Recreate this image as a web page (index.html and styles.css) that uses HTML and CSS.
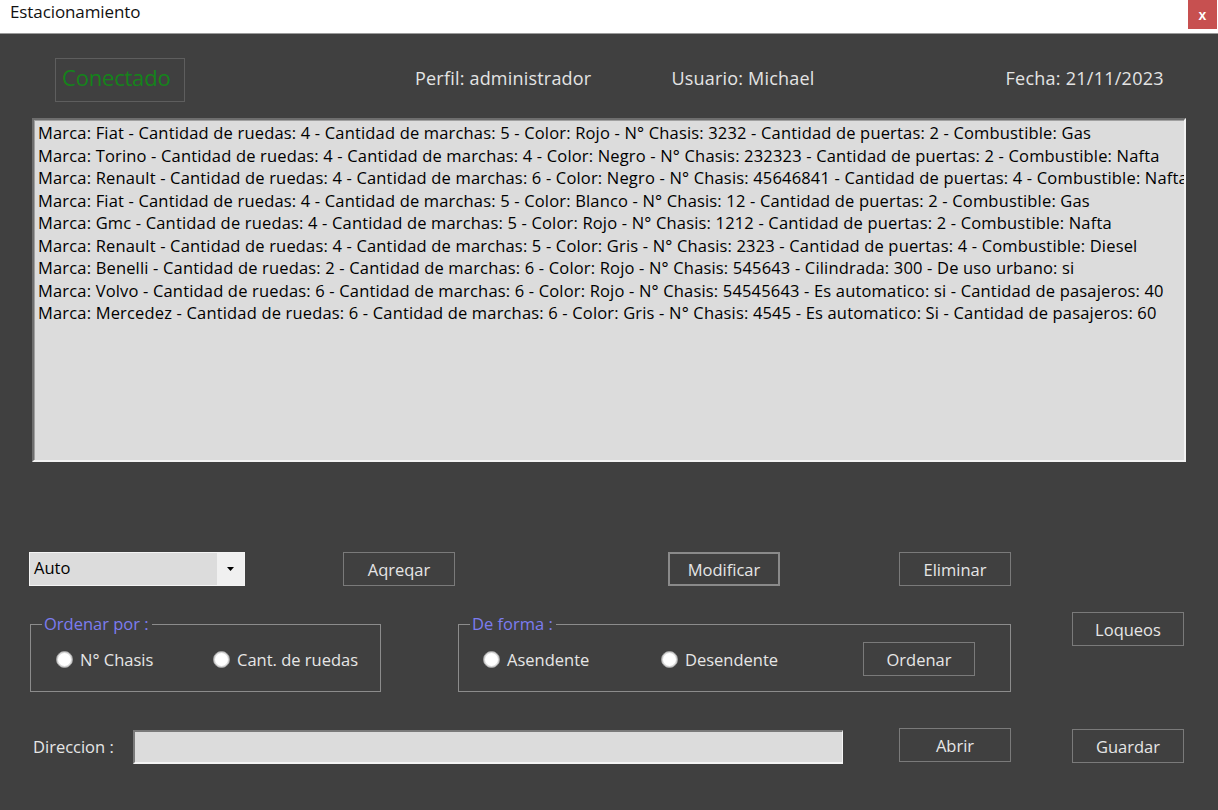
FILE: index.html
```html
<!DOCTYPE html>
<html lang="es">
<head>
<meta charset="utf-8">
<title>Estacionamiento</title>
<link rel="stylesheet" href="styles.css">
</head>
<body>
<div class="app">
  <div class="titlebar">
    <span class="title">Estacionamiento</span>
    <span class="close">x</span>
  </div>
  <div class="window">
    <div class="header">
      <div class="status">Conectado</div>
      <div class="info perfil">Perfil: administrador</div>
      <div class="info usuario">Usuario: Michael</div>
      <div class="info fecha">Fecha: 21/11/2023</div>
    </div>
    <div class="listbox">
      <div>Marca: Fiat - Cantidad de ruedas: 4 - Cantidad de marchas: 5 - Color: Rojo - N° Chasis: 3232 - Cantidad de puertas: 2 - Combustible: Gas</div>
      <div>Marca: Torino - Cantidad de ruedas: 4 - Cantidad de marchas: 4 - Color: Negro - N° Chasis: 232323 - Cantidad de puertas: 2 - Combustible: Nafta</div>
      <div>Marca: Renault - Cantidad de ruedas: 4 - Cantidad de marchas: 6 - Color: Negro - N° Chasis: 45646841 - Cantidad de puertas: 4 - Combustible: Nafta</div>
      <div>Marca: Fiat - Cantidad de ruedas: 4 - Cantidad de marchas: 5 - Color: Blanco - N° Chasis: 12 - Cantidad de puertas: 2 - Combustible: Gas</div>
      <div>Marca: Gmc - Cantidad de ruedas: 4 - Cantidad de marchas: 5 - Color: Rojo - N° Chasis: 1212 - Cantidad de puertas: 2 - Combustible: Nafta</div>
      <div>Marca: Renault - Cantidad de ruedas: 4 - Cantidad de marchas: 5 - Color: Gris - N° Chasis: 2323 - Cantidad de puertas: 4 - Combustible: Diesel</div>
      <div>Marca: Benelli - Cantidad de ruedas: 2 - Cantidad de marchas: 6 - Color: Rojo - N° Chasis: 545643 - Cilindrada: 300 - De uso urbano: si</div>
      <div>Marca: Volvo - Cantidad de ruedas: 6 - Cantidad de marchas: 6 - Color: Rojo - N° Chasis: 54545643 - Es automatico: si - Cantidad de pasajeros: 40</div>
      <div>Marca: Mercedez - Cantidad de ruedas: 6 - Cantidad de marchas: 6 - Color: Gris - N° Chasis: 4545 - Es automatico: Si - Cantidad de pasajeros: 60</div>
    </div>
    <div class="actions">
      <div class="combo">
        <span class="combo-text">Auto</span>
        <span class="combo-btn"><svg width="8" height="4" viewBox="0 0 8 4"><path d="M0 0h7L3.5 4z" fill="#000"/></svg></span>
      </div>
      <button class="btn agregar">Aqreqar</button>
      <button class="btn modificar">Modificar</button>
      <button class="btn eliminar">Eliminar</button>
    </div>
    <div class="groups">
      <fieldset class="group g1">
        <legend>Ordenar por :</legend>
        <label class="radio r1"><span class="dot"></span>N° Chasis</label>
        <label class="radio r2"><span class="dot"></span>Cant. de ruedas</label>
      </fieldset>
      <fieldset class="group g2">
        <legend>De forma :</legend>
        <label class="radio r3"><span class="dot"></span>Asendente</label>
        <label class="radio r4"><span class="dot"></span>Desendente</label>
        <button class="btn ordenar">Ordenar</button>
      </fieldset>
      <button class="btn loqueos">Loqueos</button>
    </div>
    <div class="bottom">
      <span class="dir-label">Direccion :</span>
      <div class="textbox"></div>
      <button class="btn abrir">Abrir</button>
      <button class="btn guardar">Guardar</button>
    </div>
  </div>
</div>
</body>
</html>
```

FILE: styles.css
```css
* { box-sizing: border-box; }
html, body { margin: 0; padding: 0; }
body {
  width: 1218px;
  height: 810px;
  overflow: hidden;
  font-family: "Open Sans", "Noto Sans", sans-serif;
  background: #404040;
}
.app { width: 1218px; height: 810px; display: flex; flex-direction: column; }
.titlebar {
  height: 34px;
  background: #ffffff;
  border-bottom: 1px solid #9a9a9a;
  display: flex;
  justify-content: space-between;
  align-items: flex-start;
}
.title {
  font-size: 17px;
  color: #111;
  margin: 0 0 0 10px;
  letter-spacing: -0.1px;
  line-height: 24px;
}
.close {
  width: 29px;
  height: 29px;
  margin-right: 1px;
  background: #c75050;
  color: #fff;
  font-weight: bold;
  font-size: 14px;
  display: flex;
  align-items: center;
  justify-content: center;
  font-family: "Liberation Sans", sans-serif;
}
.window { flex: 1; background: #404040; }
.header { display: flex; align-items: center; height: 44px; margin-top: 24px; }
.status {
  margin-left: 55px;
  width: 130px;
  height: 44px;
  border: 1px solid #5e5e5e;
  color: #14841a;
  font-size: 22px;
  letter-spacing: -0.2px;
  padding-left: 6px;
  line-height: 36px;
}
.info { color: #e4e4e4; font-size: 18px; letter-spacing: 0.2px; line-height: 24px; margin-top: -4px; }
.perfil { margin-left: 230px; }
.usuario { margin-left: 80px; }
.fecha { margin-left: 191px; letter-spacing: 0.25px; }
.listbox {
  margin: 16px 0 0 32px;
  width: 1154px;
  height: 344px;
  background: #dcdcdc;
  border-top: 2px solid #6e6e6e;
  border-left: 2px solid #6e6e6e;
  border-right: 2px solid #f2f2f2;
  border-bottom: 2px solid #f2f2f2;
  box-shadow: inset 1px 1px 0 #a0a0a0;
  padding: 2px 0 0 4px;
  overflow: hidden;
  color: #000;
  font-size: 16.5px;
  line-height: 22.5px;
  letter-spacing: 0.17px;
  white-space: nowrap;
}
.actions { display: flex; align-items: center; margin-top: 90px; height: 34px; }
.combo {
  margin-left: 29px;
  width: 216px;
  height: 34px;
  border: 1px solid #f4f4f4;
  background: #dcdcdc;
  display: flex;
}
.combo-text { flex: 1; font-size: 16.5px; color: #000; padding-left: 4px; line-height: 30px; }
.combo-btn { width: 27px; background: #f0f0f0; display: flex; align-items: center; justify-content: center; }
.btn {
  width: 112px;
  height: 34px;
  background: #404040;
  border: 1px solid #7a7a7a;
  color: #e6e6e6;
  font-family: "Open Sans", "Noto Sans", sans-serif;
  font-size: 16.5px;
  padding: 0;
}
.agregar { margin-left: 98px; }
.modificar { margin-left: 213px; border: 2px solid #8a8a8a; }
.eliminar { margin-left: 119px; }
.groups { display: flex; align-items: flex-start; margin-top: 29px; height: 82px; }
.group {
  margin: 0;
  border: 1px solid #8c8c8c;
  padding: 0;
  height: 77px;
  display: flex;
  align-items: center;
}
.group legend {
  color: #7c7cf0;
  font-size: 16.5px;
  padding: 0 3px 0 2px;
  margin-left: 11px;
  line-height: 18px;
}
.g1 { margin-left: 30px; width: 351px; }
.g2 { margin-left: 77px; width: 553px; }
.radio {
  display: flex;
  align-items: center;
  color: #e6e6e6;
  font-size: 16.5px;
  margin-top: -5px;
}
.dot {
  width: 17px;
  height: 17px;
  border-radius: 50%;
  background: #fff;
  border: 1px solid #9a9a9a;
  box-shadow: inset 0 0 0 1px #d8d8d8;
  margin-right: 7px;
}
.r1 { margin-left: 25px; width: 157px; }
.r2 { width: 160px; }
.r3 { margin-left: 24px; width: 178px; }
.r4 { width: 202px; }
.ordenar { margin-top: -6px; }
.loqueos { margin-left: 61px; margin-top: -3px; }
.bottom { display: flex; align-items: flex-start; margin-top: 31px; height: 36px; }
.dir-label { margin-left: 33px; margin-top: 8px; color: #e6e6e6; font-size: 16.5px; width: 100px; line-height: 22px; }
.textbox {
  width: 710px;
  height: 34px;
  margin-top: 2px;
  background: #dcdcdc;
  border-top: 2px solid #7a7a7a;
  border-left: 2px solid #7a7a7a;
  border-right: 1px solid #f4f4f4;
  border-bottom: 2px solid #f4f4f4;
}
.abrir { margin-left: 56px; }
.guardar { margin-left: 61px; margin-top: 1px; }
```
